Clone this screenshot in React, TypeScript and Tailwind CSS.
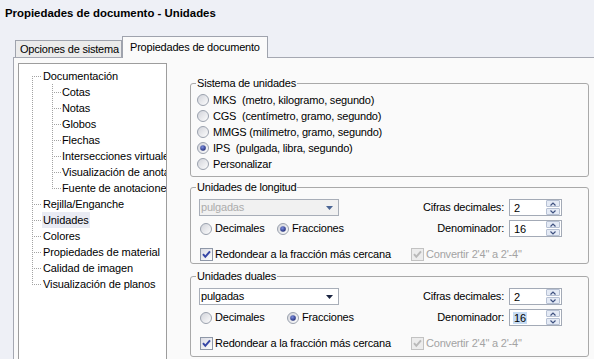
import React from "react";

function Radio({ checked }: { checked?: boolean }) {
  return (
    <svg width="12" height="12" viewBox="0 0 12 12" className="flex-none">
      <defs>
        <linearGradient id="rgBg" x1="0" y1="0" x2="1" y2="1">
          <stop offset="0" stopColor="#cfd1d8" />
          <stop offset="1" stopColor="#ffffff" />
        </linearGradient>
        <radialGradient id="rgDot" cx="0.4" cy="0.35" r="0.7">
          <stop offset="0" stopColor="#7d8fe0" />
          <stop offset="1" stopColor="#1b2672" />
        </radialGradient>
      </defs>
      <circle cx="6" cy="6" r="5.5" fill="url(#rgBg)" stroke="#9aa1ad" />
      {checked && <circle cx="6" cy="6" r="2.8" fill="url(#rgDot)" />}
    </svg>
  );
}

function Check({ disabled }: { disabled?: boolean }) {
  return (
    <svg width="13" height="13" viewBox="0 0 13 13" className="flex-none">
      <defs>
        <linearGradient id="ckBg" x1="0" y1="0" x2="1" y2="1">
          <stop offset="0" stopColor="#d9dae3" />
          <stop offset="1" stopColor="#ffffff" />
        </linearGradient>
      </defs>
      <rect
        x="0.5"
        y="0.5"
        width="12"
        height="12"
        fill={disabled ? "#ececec" : "url(#ckBg)"}
        stroke={disabled ? "#c2c2c2" : "#8e97a7"}
      />
      <path
        d="M3 6.2 L5.3 8.8 L10 3.4"
        fill="none"
        stroke={disabled ? "#b9b9b9" : "#3646a6"}
        strokeWidth="2"
      />
    </svg>
  );
}

function Arrow({ disabled }: { disabled?: boolean }) {
  return (
    <svg width="7" height="4" viewBox="0 0 7 4" className="flex-none ml-auto mr-[5px]">
      <path d="M0 0 H7 L3.5 4 Z" fill={disabled ? "#4b6594" : "#1a2440"} />
    </svg>
  );
}

function SpinBtn({ up }: { up?: boolean }) {
  return (
    <div className="w-[14px] h-[7px] border border-[#b7c1d4] bg-[#e4eaf5] rounded-[1px] flex items-center justify-center">
      <svg width="6" height="4" viewBox="0 0 6 4">
        <path
          d={up ? "M0.5 3.5 L3 1 L5.5 3.5" : "M0.5 0.5 L3 3 L5.5 0.5"}
          fill="none"
          stroke="#3f5180"
          strokeWidth="1.2"
        />
      </svg>
    </div>
  );
}

function NumInput({ value, selected }: { value: string; selected?: boolean }) {
  return (
    <div className="w-[53px] h-[17px] border border-[#a3aab6] bg-white flex items-center pl-[3px]">
      <span className={selected ? "bg-[#c7dcf3] px-[1px] leading-[12px]" : "px-[1px] leading-[12px]"}>{value}</span>
      <div className="ml-auto mr-[1px] flex flex-col gap-px">
        <SpinBtn up />
        <SpinBtn />
      </div>
    </div>
  );
}

function Combo({ disabled }: { disabled?: boolean }) {
  return (
    <div
      className={
        disabled
          ? "w-[140px] h-[17px] border border-[#a8aeb8] bg-[#f1f1f1] text-[#acacac] flex items-center pl-[1px]"
          : "w-[140px] h-[17px] border border-[#a8aeb8] bg-white text-black flex items-center pl-[1px]"
      }
    >
      <span>pulgadas</span>
      <Arrow disabled={disabled} />
    </div>
  );
}

function UnitGroup({
  title,
  disabled,
  fracW,
  pb,
  mt,
  selected16,
}: {
  title: string;
  disabled?: boolean;
  fracW: string;
  pb: string;
  mt: string;
  selected16?: boolean;
}) {
  return (
    <fieldset className={`border border-[#a9a9a9] rounded-[3px] ${mt}`}>
      <legend className="ml-[5px] px-[1px] leading-[14px]">{title}</legend>
      <div className={`pt-[5px] ${pb}`}>
        <div className="flex h-[17px]">
          <div className="w-[220px] pl-[8px]">
            <Combo disabled={disabled} />
          </div>
          <div className="flex-1 flex items-center justify-end pr-[26px] gap-[5px]">
            <span>Cifras decimales:</span>
            <NumInput value="2" />
          </div>
        </div>
        <div className="flex h-[17px] mt-[4px]">
          <div className="w-[220px] pl-[9px] flex items-center">
            <div className={`${fracW} flex items-center gap-[3px]`}>
              <Radio />
              <span>Decimales</span>
            </div>
            <div className="flex items-center gap-[3px]">
              <Radio checked />
              <span>Fracciones</span>
            </div>
          </div>
          <div className="flex-1 flex items-center justify-end pr-[26px] gap-[5px]">
            <span>Denominador:</span>
            <NumInput value="16" selected={selected16} />
          </div>
        </div>
        <div className="flex h-[16px] mt-[9px]">
          <div className="w-[220px] pl-[9px] flex items-center gap-[2px]">
            <Check />
            <span>Redondear a la fracción más cercana</span>
          </div>
          <div className="flex-1 flex items-center gap-[2px] text-[#a3a3a3]">
            <Check disabled />
            <span>Convertir 2'4" a 2'-4"</span>
          </div>
        </div>
      </div>
    </fieldset>
  );
}

const tree: { t: string; l: number; sel?: boolean }[] = [
  { t: "Documentación", l: 1 },
  { t: "Cotas", l: 2 },
  { t: "Notas", l: 2 },
  { t: "Globos", l: 2 },
  { t: "Flechas", l: 2 },
  { t: "Intersecciones virtuales", l: 2 },
  { t: "Visualización de anotaciones", l: 2 },
  { t: "Fuente de anotaciones", l: 2 },
  { t: "Rejilla/Enganche", l: 1 },
  { t: "Unidades", l: 1, sel: true },
  { t: "Colores", l: 1 },
  { t: "Propiedades de material", l: 1 },
  { t: "Calidad de imagen", l: 1 },
  { t: "Visualización de planos", l: 1 },
];

function TreeLines() {
  const l1 = tree.map((n, i) => ({ ...n, i })).filter((n) => n.l === 1);
  const l2 = tree.map((n, i) => ({ ...n, i })).filter((n) => n.l === 2);
  return (
    <svg className="absolute left-0 top-0 pointer-events-none" width="147" height="240" shapeRendering="crispEdges">
      <line x1="13.5" y1="12" x2="13.5" y2="221" stroke="#a3a3a3" strokeDasharray="1 1" />
      {l1.map((n) => (
        <line key={n.i} x1="15" y1={12.5 + n.i * 16} x2="23" y2={12.5 + n.i * 16} stroke="#a3a3a3" strokeDasharray="1 1" />
      ))}
      <line x1="33.5" y1="20" x2="33.5" y2="125" stroke="#a3a3a3" strokeDasharray="1 1" />
      {l2.map((n) => (
        <line key={n.i} x1="35" y1={12.5 + n.i * 16} x2="42" y2={12.5 + n.i * 16} stroke="#a3a3a3" strokeDasharray="1 1" />
      ))}
    </svg>
  );
}

export default function App() {
  return (
    <div className="w-[594px] h-[359px] overflow-hidden bg-[#eef0f6] font-['Liberation_Sans',Arial,sans-serif] text-[11px] text-black tracking-[-0.2px]">
      <div className="h-[30px] pl-[5px] pt-[6px] font-bold text-[11.4px] leading-[15px] tracking-normal">
        Propiedades de documento - Unidades
      </div>
      <div className="relative z-10 h-[27px] flex items-end pl-[15px]">
        <div className="h-[17px] w-[107px] border border-b-0 border-[#9fa3ad] bg-[#ebebeb] pl-[4px] leading-[17px]">
          Opciones de sistema
        </div>
        <div className="h-[22px] -mb-px w-[146px] border border-b-0 border-[#9fa3ad] bg-[#fafafa] pl-[7px] leading-[21px]">
          Propiedades de documento
        </div>
      </div>
      <div className="ml-[13px] h-[310px] border-l border-t border-[#a5a8b2] bg-[#fafafa] flex items-start">
        <div className="relative ml-[4px] mt-[5px] w-[149px] h-[300px] flex-none border border-[#9d9d9d] bg-white pt-[4px] overflow-hidden tracking-[-0.1px]">
          <TreeLines />
          {tree.map((n) => (
            <div
              key={n.t}
              className={`h-[16px] flex items-center whitespace-nowrap ${n.l === 1 ? "pl-[23px]" : "pl-[42px]"}`}
            >
              <span className={n.sel ? "bg-[#e9ebf3] px-[1px] leading-[16px]" : "px-[1px] leading-[16px]"}>{n.t}</span>
            </div>
          ))}
        </div>
        <div className="ml-[23px] mt-[18px] w-[399px] flex-none">
          <fieldset className="border border-[#a9a9a9] rounded-[3px]">
            <legend className="ml-[5px] px-[1px] leading-[14px]">Sistema de unidades</legend>
            <div className="pt-[2px] pb-[4px] pl-[6px]">
              {[
                ["MKS  (metro, kilogramo, segundo)", false],
                ["CGS  (centímetro, gramo, segundo)", false],
                ["MMGS (milímetro, gramo, segundo)", false],
                ["IPS  (pulgada, libra, segundo)", true],
                ["Personalizar", false],
              ].map(([t, c]) => (
                <div key={t as string} className="h-[16px] flex items-center gap-[4px]">
                  <Radio checked={c as boolean} />
                  <span className="whitespace-pre">{t as string}</span>
                </div>
              ))}
            </div>
          </fieldset>
          <UnitGroup title="Unidades de longitud" disabled fracW="w-[77px]" pb="pb-[1px]" mt="mt-[3px]" />
          <UnitGroup title="Unidades duales" fracW="w-[87px]" pb="pb-[5px]" mt="mt-[5px]" selected16 />
        </div>
      </div>
    </div>
  );
}
